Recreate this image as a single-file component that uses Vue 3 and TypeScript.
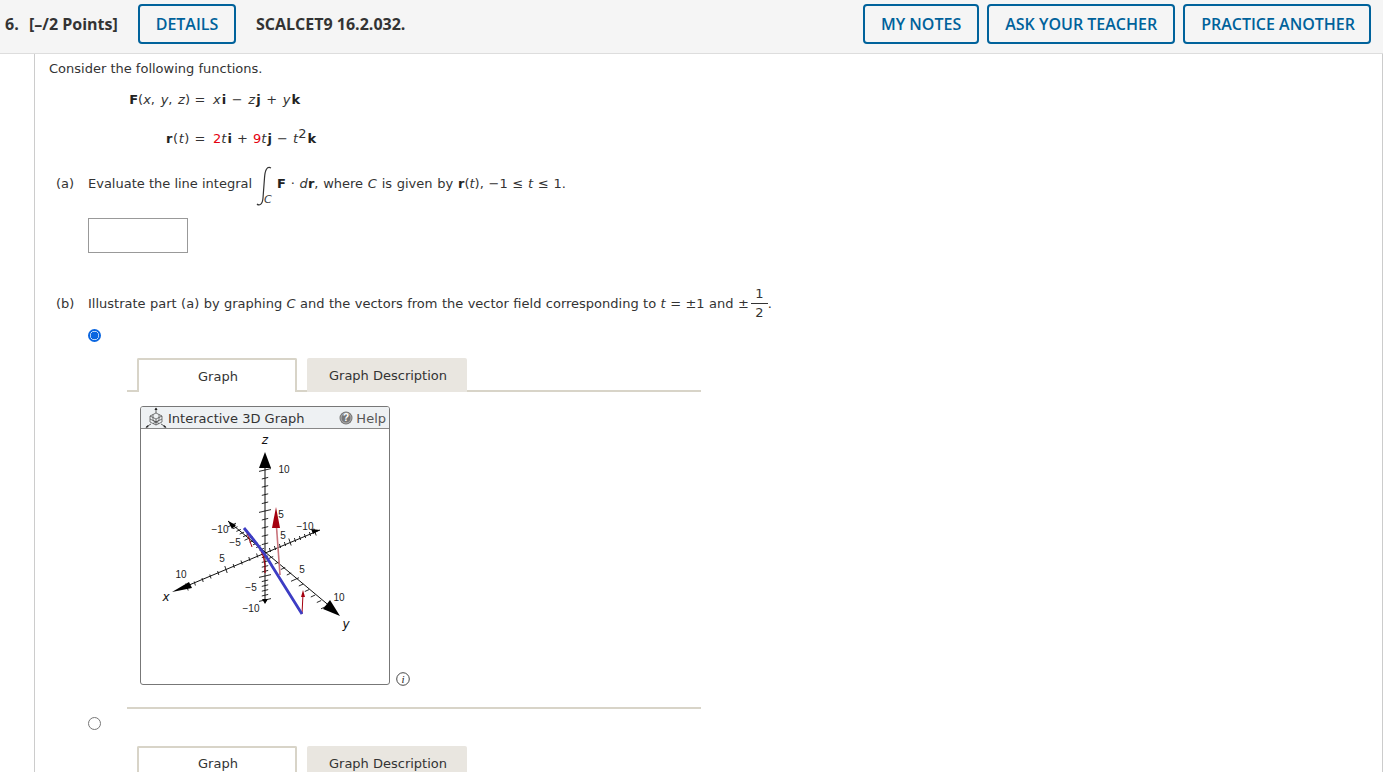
<script setup lang="ts">
type Pt = { x: number; y: number }

const center: Pt = { x: 265, y: 552 }
const range = [-10, -9, -8, -7, -6, -5, -4, -3, -2, -1, 1, 2, 3, 4, 5, 6, 7, 8, 9, 10]

// the plot has perspective, so each half of an axis gets its own step
const onAxis = (n: number, plus: Pt, minus: Pt): Pt => {
  const s = n > 0 ? plus : minus
  const k = Math.abs(n)
  return { x: center.x + s.x * k, y: center.y + s.y * k }
}

const tick = (p: Pt, dx: number, dy: number) => `M${p.x - dx} ${p.y - dy}L${p.x + dx} ${p.y + dy}`

const xTicks = range
  .map((n) => tick(onAxis(n, { x: -7.8, y: 3.5 }, { x: 5, y: -2 }), Math.abs(n) % 5 === 0 ? 1.2 : 0.6, Math.abs(n) % 5 === 0 ? 3.5 : 2))
  .join('')
const yTicks = range
  .map((n) => tick(onAxis(n, { x: 6, y: 5.5 }, { x: -3.3, y: -2.7 }), Math.abs(n) % 5 === 0 ? 4 : 2.2, Math.abs(n) % 5 === 0 ? -1.8 : -1))
  .join('')
const zTicks = range
  .map((n) => tick(onAxis(n, { x: 0, y: -8.2 }, { x: 0, y: 4.8 }), Math.abs(n) % 5 === 0 ? 6 : 3.2, Math.abs(n) % 5 === 0 ? -1.4 : -0.8))
  .join('')

const labels = [
  { t: '10', x: 284, y: 473 },
  { t: '5', x: 281, y: 518 },
  { t: '−10', x: 305, y: 530 },
  { t: '5', x: 283, y: 539 },
  { t: '−10', x: 220, y: 533 },
  { t: '−5', x: 235, y: 546 },
  { t: '5', x: 222, y: 562 },
  { t: '10', x: 181, y: 578 },
  { t: '5', x: 302, y: 573 },
  { t: '10', x: 339, y: 601 },
  { t: '−5', x: 251, y: 591 },
  { t: '−10', x: 251, y: 612 }
]
</script>

<template>
  <div class="page">
    <header class="head">
      <span class="num">6.</span>
      <span class="points">[–/2 Points]</span>
      <button class="btn details">DETAILS</button>
      <span class="code">SCALCET9 16.2.032.</span>
      <div class="actions">
        <button class="btn">MY NOTES</button>
        <button class="btn">ASK YOUR TEACHER</button>
        <button class="btn last">PRACTICE ANOTHER</button>
      </div>
    </header>

    <main class="body">
      <p class="intro">Consider the following functions.</p>

      <div class="formulas">
        <div class="lhs"><b>F</b>(<i>x</i>, <i>y</i>, <i>z</i>)</div>
        <div class="eq">=</div>
        <div class="rhs"><i>x</i><b>i</b> − <i>z</i><b>j</b> + <i>y</i><b>k</b></div>
        <div class="lhs wide"><b>r</b>(<i>t</i>)</div>
        <div class="eq">=</div>
        <div class="rhs tight"><span class="red">2</span><i>t</i><b>i</b> + <span class="red">9</span><i>t</i><b>j</b> − <i>t</i><sup>2</sup><b>k</b></div>
      </div>

      <div class="part part-a">
        <span class="tag">(a)</span>
        <span>Evaluate the line integral</span>
        <span class="integral">
          <svg viewBox="0 0 25 50" width="25" height="50" fill="none" stroke="#333" stroke-width="1.2">
            <path d="M19 10C15 8 13 12 12.5 20L11 40C10.5 47 7 48 5 46" />
          </svg>
          <i class="int-sub">C</i>
        </span>
        <span class="spaced"><b>F</b> · <i>d</i><b>r</b>, where <i>C</i> is given by <b>r</b>(<i>t</i>), −1 ≤ <i>t</i> ≤ 1.</span>
      </div>
      <div class="answer"></div>

      <div class="part part-b">
        <span class="tag">(b)</span>
        <span class="line-b">Illustrate part (a) by graphing <i>C</i> and the vectors from the vector field corresponding to <i>t</i> = ±1 and ±</span>
        <span class="frac"><span class="top">1</span><span>2</span></span><span>.</span>
      </div>

      <div class="radio on"></div>

      <div class="tabs">
        <div class="tab active">Graph</div>
        <div class="tab">Graph Description</div>
      </div>

      <div class="graph-row">
        <div class="graph">
          <div class="graph-title">
            <svg class="cube" viewBox="0 0 22 22" width="22" height="22" fill="none" stroke="#444" stroke-width="0.7">
              <path d="M11 1v5M1 20l5-3M21 20l-5-3" stroke="#222" />
              <path d="M11 0.5l1.6 2.5h-3.2zM0.5 21l2-2.8 1.2 1.8zM21.5 21l-2-2.8-1.2 1.8z" fill="#222" stroke="none" />
              <path d="M11 6l6 3v6l-6 3-6-3V9zM5 9l6 3 6-3M11 12v6M8 7.5v6l6 3M14 7.5v6l-6 3M5 12l6 3 6-3" />
            </svg>
            <span class="title-text">Interactive 3D Graph</span>
            <span class="help">
              <svg viewBox="0 0 14 14" width="14" height="14">
                <circle cx="7" cy="7" r="6.5" fill="#777" />
                <circle cx="7" cy="7" r="5" fill="none" stroke="#bbb" stroke-width="0.8" />
                <text x="7" y="10.4" text-anchor="middle" class="help-q">?</text>
              </svg>
              Help
            </span>
          </div>
          <svg class="plot" viewBox="141 429 248 255" width="248" height="255">
            <g stroke="#111" fill="none">
              <path d="M265 460V601M182 588L320 530M228 521L332 608" stroke-width="1" />
              <path :d="xTicks + yTicks + zTicks" stroke-width="0.9" />
            </g>
            <g fill="#000">
              <path d="M265 452l6 16h-12z" />
              <path d="M172 592l17-10 3 6z" />
              <path d="M340 616l-17-7 7-9z" />
              <path d="M320 530l-9-1 2 5zM228 521l4 8 4-4zM265 604l-3-5h6z" />
            </g>
            <g fill="none" stroke="#a5000f">
              <path d="M265 573C266 560 262 550 256 543" stroke-width="1.2" />
              <path d="M252 547L247 533" stroke-width="1" />
            </g>
            <path d="M280 575L276 520" stroke="#c9747c" stroke-width="1.6" />
            <path d="M302 614L303 594" stroke="#a5000f" stroke-width="1" />
            <path d="M276 507l4 21h-8z" fill="#a5000f" />
            <path d="M303 590l2 7h-4z" fill="#a5000f" />
            <path d="M244 528C254 540 264 552 272 566C282 582 292 598 302 614" fill="none" stroke="#3d3dc4" stroke-width="2.8" />
            <g class="plot-label">
              <text v-for="l in labels" :key="l.t + l.x" :x="l.x" :y="l.y" text-anchor="middle">{{ l.t }}</text>
            </g>
            <text class="axis-name" x="265" y="444" text-anchor="middle">z</text>
            <text class="axis-name" x="166" y="601" text-anchor="middle">x</text>
            <text class="axis-name" x="346" y="628" text-anchor="middle">y</text>
          </svg>
        </div>
        <svg class="info" viewBox="0 0 14 14" width="14" height="14">
          <circle cx="7" cy="7" r="6.3" fill="#fff" stroke="#333" stroke-width="0.9" />
          <text x="7" y="10.8" text-anchor="middle" class="info-i">i</text>
        </svg>
      </div>

      <div class="rule"></div>

      <div class="radio off"></div>

      <div class="tabs second">
        <div class="tab active">Graph</div>
        <div class="tab">Graph Description</div>
      </div>
    </main>
  </div>
</template>

<style>
html,
body {
  margin: 0;
  height: 772px;
  overflow: hidden;
  background: #fff;
}
</style>

<style scoped>
.page {
  width: 1383px;
  height: 772px;
  overflow: hidden;
  font-family: 'DejaVu Sans', Verdana, sans-serif;
  font-size: 13px;
  color: #333;
}
.head {
  display: flex;
  align-items: center;
  box-sizing: border-box;
  height: 54px;
  padding: 0 12px 5px 5px;
  background: #f5f5f5;
  border-bottom: 1px solid #ddd;
  font-family: 'Open Sans', sans-serif;
  font-size: 16px;
  font-weight: 700;
}
.num {
  width: 24px;
}
.points {
  width: 109px;
}
.btn {
  height: 40px;
  padding: 0 16px;
  background: transparent;
  border: 2px solid #00629b;
  border-radius: 4px;
  font: 600 16px 'Open Sans', sans-serif;
  color: #00629b;
}
.btn.last {
  padding-right: 14px;
}
.details {
  width: 98px;
  padding: 0;
}
.code {
  margin-left: 20px;
}
.actions {
  display: flex;
  gap: 8px;
  margin-left: auto;
}
.body {
  box-sizing: border-box;
  height: 718px;
  margin-left: 34px;
  padding-left: 14px;
  border-left: 1px solid #ccc;
  border-right: 1px solid #ccc;
}
.intro {
  margin: 0;
  padding-top: 7px;
  line-height: 16px;
}
b {
  color: #222;
}
.formulas {
  display: grid;
  grid-template-columns: 141px 20px auto;
  grid-auto-rows: 39px;
  justify-content: start;
  align-items: baseline;
  margin: 15px 0 0 0;
  line-height: 16px;
}
.lhs {
  text-align: right;
  word-spacing: 1.5px;
}
.lhs.wide {
  letter-spacing: 0.6px;
}
.eq {
  text-align: center;
}
.rhs {
  padding-left: 3px;
  word-spacing: 1.5px;
}
.rhs.tight {
  word-spacing: 1px;
}
.rhs b {
  margin-left: 1px;
}
.red {
  color: #e5000f;
}
sup {
  font-size: 13px;
  line-height: 0;
}
.part {
  display: flex;
  align-items: center;
  white-space: pre-wrap;
}
.part-a {
  height: 52px;
  margin: -13px 0 0 7px;
}
.tag {
  width: 32px;
}
.spaced {
  word-spacing: 0.6px;
}
.line-b {
  word-spacing: 0.3px;
}
.integral {
  position: relative;
  display: block;
  width: 25px;
  height: 50px;
}
.integral svg {
  display: block;
}
.int-sub {
  position: absolute;
  left: 12px;
  top: 35px;
  font-size: 11px;
  line-height: 14px;
}
.answer {
  box-sizing: border-box;
  width: 100px;
  height: 35px;
  margin: 9px 0 0 39px;
  border: 1px solid #999;
}
.part-b {
  height: 36px;
  margin: 32px 0 0 7px;
}
.frac {
  display: inline-flex;
  flex-direction: column;
  align-items: center;
  width: 17px;
  margin-left: 2px;
  line-height: 18px;
}
.frac .top {
  width: 100%;
  text-align: center;
  border-bottom: 1px solid #333;
}
.radio {
  box-sizing: border-box;
  width: 13px;
  height: 13px;
  margin-left: 39px;
  border-radius: 50%;
}
.radio.on {
  margin-top: 8px;
  border: 2px solid #0a66e0;
  background: radial-gradient(circle, #0a66e0 0 3.6px, #fff 4.2px);
}
.radio.off {
  margin-top: 8px;
  border: 1px solid #777;
  background: #fff;
}
.tabs {
  display: flex;
  gap: 10px;
  box-sizing: border-box;
  width: 574px;
  height: 34px;
  margin: 16px 0 0 78px;
  padding-left: 10px;
  border-bottom: 2px solid #d8d4c8;
}
.tabs.second {
  margin-top: 16px;
}
.tab {
  box-sizing: border-box;
  width: 160px;
  height: 34px;
  padding: 9px 0 0 2px;
  text-align: center;
  line-height: 18px;
  background: #e9e6e0;
  border-radius: 2px 2px 0 0;
}
.tab.active {
  background: #fff;
  border: 2px solid #d8d4c8;
  border-bottom: none;
  padding-top: 8px;
}
.tabs.second .tab.active {
  padding-top: 7px;
}
.graph-row {
  display: flex;
  align-items: flex-end;
  margin: 14px 0 0 91px;
}
.graph {
  box-sizing: border-box;
  width: 250px;
  height: 279px;
  border: 1px solid #777;
  border-radius: 3px;
  overflow: hidden;
}
.graph-title {
  display: flex;
  align-items: center;
  box-sizing: border-box;
  height: 22px;
  padding: 1px 3px 0 4px;
  background: #eef1f3;
  border-bottom: 1px solid #888;
}
.cube {
  flex: none;
}
.title-text {
  margin-left: 1px;
}
.help {
  display: flex;
  align-items: center;
  gap: 3px;
  margin-left: auto;
  color: #555;
}
.help-q {
  font: bold 10px 'Liberation Sans', sans-serif;
  fill: #fff;
}
.plot {
  display: block;
}
.plot-label text {
  font: 10px 'Liberation Sans', sans-serif;
  fill: #222;
}
.axis-name {
  font: italic 12px 'DejaVu Sans', sans-serif;
  fill: #111;
}
.info {
  margin: 0 0 -1px 6px;
}
.info-i {
  font: italic 11px 'Liberation Serif', serif;
  fill: #222;
}
.rule {
  width: 574px;
  height: 2px;
  margin: 22px 0 0 78px;
  background: #d8d4c8;
}
</style>
